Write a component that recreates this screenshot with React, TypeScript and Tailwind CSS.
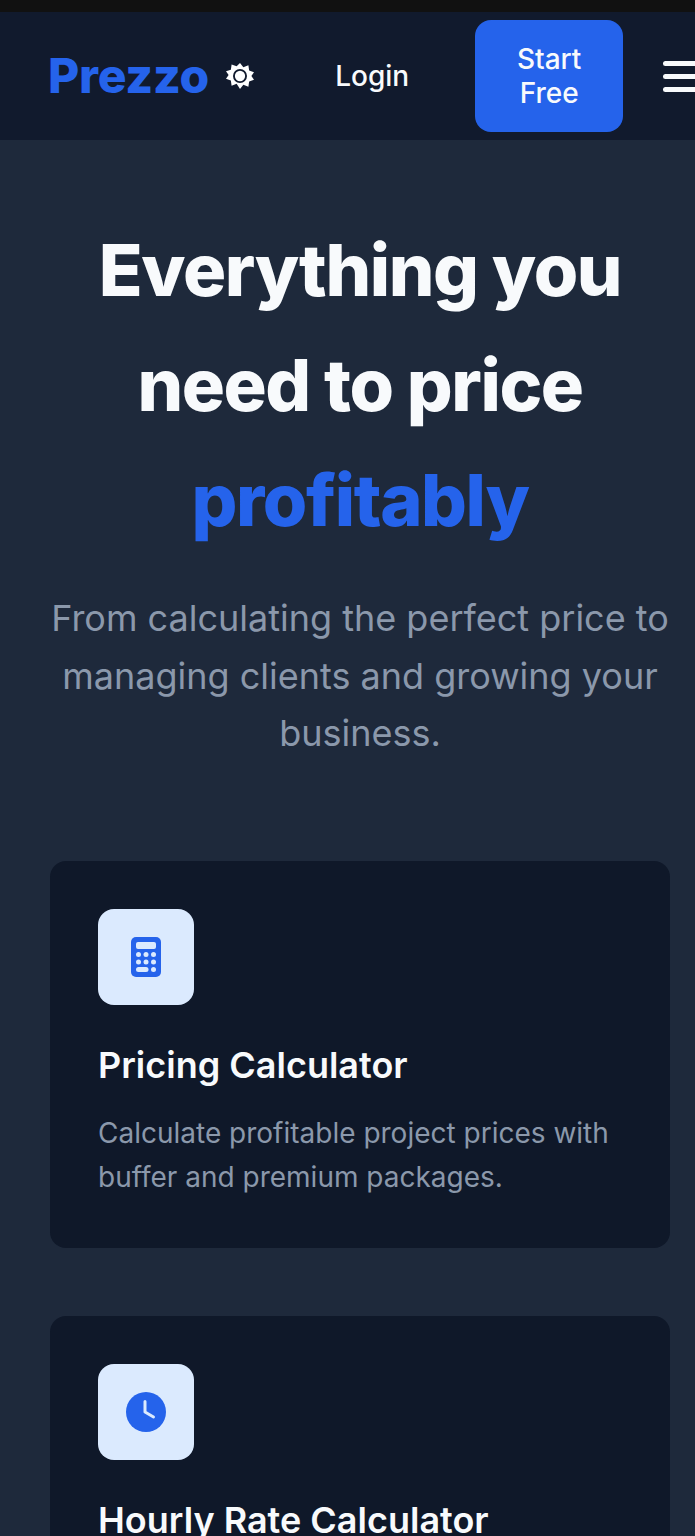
import type { ReactNode } from 'react'

function SunIcon() {
  return (
    <svg width="28" height="28" viewBox="0 0 30 30" className="shrink-0">
      <path
        fill="#fff"
        d="M15 1l3.600 4.600 5.400-2 .8 5.600 5.200 1.800-2.800 4 2.800 4-5.200 1.800-.8 5.600-5.400-2L15 29l-3.600-5.600-5.400 2-.8-5.600L0 18l2.800-4L0 10l5.200-1.800.8-5.600 5.400 2z"
      />
      <circle cx="15" cy="15" r="6.500" fill="none" stroke="#111a2d" strokeWidth="2" />
    </svg>
  )
}

function CalculatorIcon() {
  return (
    <svg width="30" height="40" viewBox="0 0 30 40">
      <rect width="30" height="40" rx="5" fill="#2563eb" />
      <rect x="5" y="5" width="20" height="7" rx="2" fill="#dbeafe" />
      <g fill="#dbeafe">
        <circle cx="7.500" cy="17.500" r="2.500" />
        <circle cx="15" cy="17.500" r="2.500" />
        <circle cx="22.500" cy="17.500" r="2.500" />
        <circle cx="7.500" cy="25" r="2.500" />
        <circle cx="15" cy="25" r="2.500" />
        <circle cx="22.500" cy="25" r="2.500" />
        <rect x="5" y="30" width="12.500" height="5" rx="2.500" />
        <circle cx="22.500" cy="32.500" r="2.500" />
      </g>
    </svg>
  )
}

function ClockIcon() {
  return (
    <svg width="40" height="40" viewBox="0 0 40 40">
      <circle cx="20" cy="20" r="20" fill="#2563eb" />
      <path d="M19 9.500V20l8.500 5" fill="none" stroke="#dbeafe" strokeWidth="3" strokeLinecap="round" strokeLinejoin="round" />
    </svg>
  )
}

function Feature({ icon, title, text }: { icon: ReactNode; title: string; text?: string }) {
  return (
    <div className="rounded-2xl bg-[#0f1829] px-12 pt-12 pb-[49px]">
      <div className="flex size-24 items-center justify-center rounded-2xl bg-[#dbeafe]">{icon}</div>
      <h3 className="mt-[30px] text-4xl leading-[60px] font-semibold text-[#f8fafc]">{title}</h3>
      {text && <p className="mt-4 text-[28px] leading-[44px] text-[#8b98ab]">{text}</p>}
    </div>
  )
}

export default function App() {
  return (
    <div className="h-[1536px] w-[695px] overflow-hidden bg-[#1e293b] font-['Inter',sans-serif]">
      <div className="h-3 bg-[#111111]" />
      <nav className="flex h-32 w-[720px] items-center bg-[#111a2d] pl-[48px]">
        <span className="text-5xl font-extrabold tracking-[-0.2px] text-[#2563eb]">Prezzo</span>
        <span className="ml-[17px]"><SunIcon /></span>
        <a className="ml-[81px] text-[28px] font-medium text-[#f8fafc]">Login</a>
        <button className="ml-[66px] h-28 w-[148px] rounded-2xl bg-[#2563eb] px-8 text-[28px] leading-[34px] font-medium text-[#f8fafc]">
          Start Free
        </button>
        <div className="ml-10 flex w-10 flex-col gap-2">
          <span className="h-[5px] rounded-full bg-[#f8fafc]" />
          <span className="h-[5px] rounded-full bg-[#f8fafc]" />
          <span className="h-[5px] rounded-full bg-[#f8fafc]" />
        </div>
      </nav>
      <main className="w-[720px] px-[50px]">
        <section className="pt-[72px] text-center">
          <h1 className="text-[72px] leading-[115px] font-extrabold tracking-[-0.02em] text-[#f8fafc]">
            Everything you need to price <span className="text-[#2563eb]">profitably</span>
          </h1>
          <p className="mt-[33px] text-4xl leading-[57.6px] text-[#8b98ab]">
            From calculating the perfect price to managing clients and growing your business.
          </p>
        </section>
        <div className="mt-[98px] flex flex-col gap-[68px]">
          <Feature
            icon={<CalculatorIcon />}
            title="Pricing Calculator"
            text="Calculate profitable project prices with buffer and premium packages."
          />
          <Feature icon={<ClockIcon />} title="Hourly Rate Calculator" />
        </div>
      </main>
    </div>
  )
}
